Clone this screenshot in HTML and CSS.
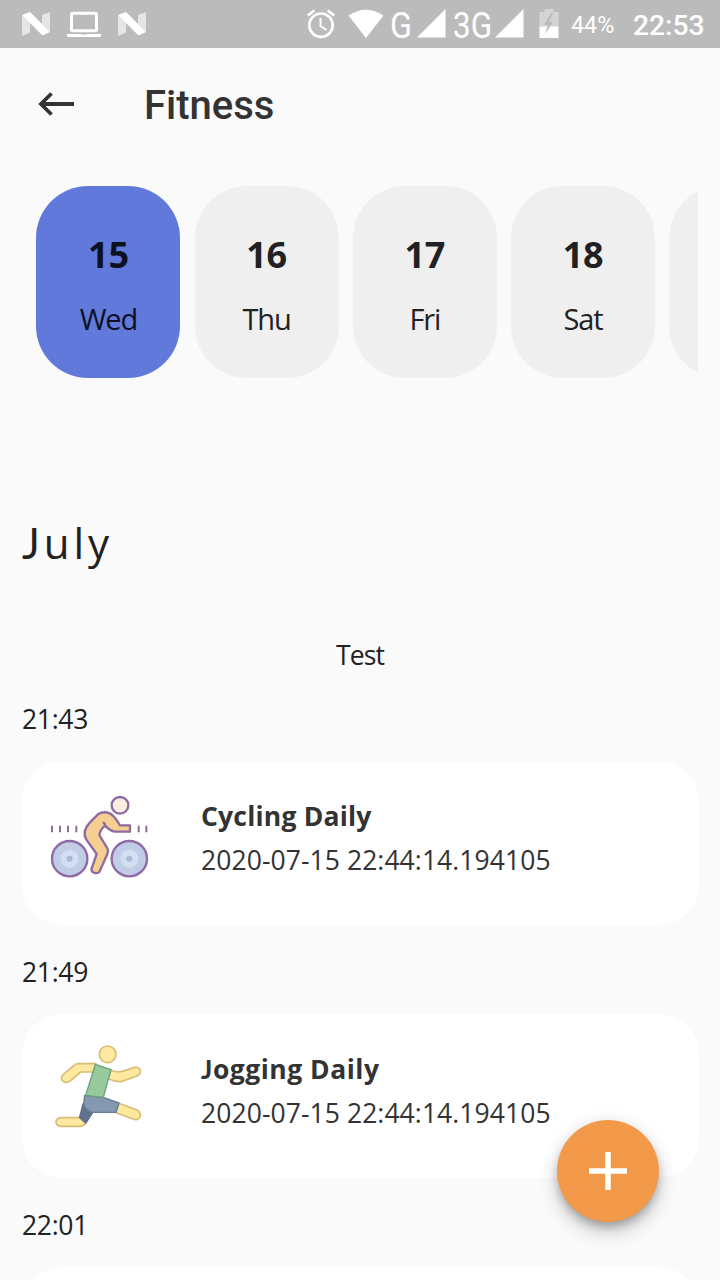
FILE: index.html
```html
<!DOCTYPE html>
<html lang="en">
<head>
<meta charset="utf-8">
<title>Fitness</title>
<link rel="stylesheet" href="styles.css">
</head>
<body>
<div class="screen">
  <header class="status">
    <svg class="notices" width="150" height="48" viewBox="0 0 150 48">
      <g id="nougat">
        <path fill="#e5e5e5" d="M22 15v21l8-3.500V20zM50 12v20l-8-8V15z"/>
        <path fill="#fff" d="M22 15l8-3 20 20-7.500 3.500z"/>
      </g>
      <rect x="71.500" y="13.200" width="25" height="17.500" rx="1.500" fill="none" stroke="#fff" stroke-width="3"/>
      <path fill="#fff" d="M67 34h34v1.500q0 1.500-1.500 1.500h-31q-1.500 0-1.500-1.500z"/>
      <path fill="#ddd" d="M81 34h6v1h-6z"/>
      <use href="#nougat" x="96"/>
    </svg>
    <div class="signals">
      <svg width="230" height="48" viewBox="300 0 230 48">
        <g fill="none" stroke="#fff">
          <circle cx="321" cy="25.200" r="11.700" stroke-width="2.600"/>
          <path d="M320.500 18v8l6 4" stroke-width="2"/>
          <path d="M307.800 15.500l6.500-5M327.700 10.500l6.500 5" stroke-width="2.800"/>
        </g>
        <path fill="#fff" d="M348.500 15.500Q366 4 383.500 15.500L366 38zM445.500 9v28.500H417zM523.500 9v28.500H495z"/>
        <g class="network" fill="#fff">
          <text x="390" y="37.500" textLength="22" lengthAdjust="spacingAndGlyphs">G</text>
          <text x="453" y="37.500" textLength="39" lengthAdjust="spacingAndGlyphs">3G</text>
        </g>
      </svg>
      <svg class="battery" width="20" height="48" viewBox="0 0 20 48">
        <path fill="#d4d4d4" d="M.5 12h5V9h9v3h5v15H.5z"/>
        <path fill="#fff" d="M.5 26.500h19V38H.5z"/>
        <path fill="#bbb" d="M12 13L5 25h4l-3 9 8-12h-4l4-9z"/>
      </svg>
      <span class="percent">44%</span>
      <span class="clock">22:53</span>
    </div>
  </header>

  <div class="appbar">
    <svg width="40" height="28" viewBox="0 0 40 28"><path d="M38 14H5M15.500 3.500L5 14l10.500 10.500" fill="none" stroke="#333" stroke-width="3.800"/></svg>
    <h1>Fitness</h1>
  </div>

  <div class="week">
    <div class="day active"><b>15</b><span>Wed</span></div>
    <div class="day"><b>16</b><span>Thu</span></div>
    <div class="day"><b>17</b><span>Fri</span></div>
    <div class="day"><b>18</b><span>Sat</span></div>
    <div class="day"></div>
  </div>

  <h2><span class="cap">J</span>uly</h2>
  <p class="label">Test</p>

  <div class="time">21:43</div>
  <article class="card">
    <svg class="sport" width="120" height="105" viewBox="0 0 360 315">
      <g stroke="#8e6ba5" stroke-width="7">
        <g fill="#c1cde7"><circle cx="89" cy="221" r="53"/><circle cx="268" cy="221" r="53"/></g>
        <path d="M36 122v20M60 122v20M84 122v20M109 122v20M296 122v20M319 122v20" stroke-width="6"/>
        <path fill="#f5cf90" stroke-linejoin="round" d="M150 112L174 88Q190 77 209 85Q219 89 233 110L240 121H270V140H224Q211 138 195 122Q180 135 178 150L202 190Q206 198 202 207L179 259Q174 267 161 263Q153 260 155 250L170 207L139 164Q124 139 150 112Z"/>
        <path fill="none" d="M189 112q8 5 7 15"/>
        <circle cx="240" cy="61" r="25" fill="#faeee0"/>
      </g>
      <g fill="#d4def2"><circle cx="89" cy="221" r="27"/><circle cx="268" cy="221" r="27"/></g>
      <g fill="#a9b9d6"><circle cx="89" cy="221" r="9"/><circle cx="268" cy="221" r="9"/></g>
    </svg>
    <div class="info"><h3>Cycling Daily</h3><p>2020-07-15 22:44:14.194105</p></div>
  </article>

  <div class="time">21:49</div>
  <article class="card jogging">
    <svg class="sport" width="120" height="105" viewBox="0 0 360 315">
      <g fill="#ffe8a0" stroke="#d9bd75" stroke-width="5" stroke-linejoin="round">
        <circle cx="203" cy="55" r="25"/>
        <path d="M168 83H115Q107 83 100 90L69 116Q60 127 69 136Q78 143 89 136L122 108H162Z"/>
        <path d="M212 102Q232 111 246 106L284 94Q298 92 301 103Q303 114 291 120L247 136Q229 139 204 128Z"/>
        <path d="M236 202L291 222Q304 230 300 243Q294 255 279 249L228 230Z"/>
        <path d="M119 245H61Q48 248 48 259Q50 270 62 271H124L137 263Z"/>
      </g>
      <path d="M129 202L118 245L138 262L158 231L160 204Z" fill="#5f7391" stroke="#596c89" stroke-width="3"/>
      <path d="M134 178L190 184L237 201L228 229H157Q138 223 131 204Z" fill="#8498b0" stroke="#667e9c" stroke-width="4"/>
      <path d="M166 85L213 101L190 184L137 178Z" fill="#97c99d" stroke="#68a179" stroke-width="4"/>
    </svg>
    <div class="info"><h3><span class="cap">J</span>ogging Daily</h3><p>2020-07-15 22:44:14.194105</p></div>
  </article>

  <div class="time">22:01</div>
  <article class="card"></article>

  <button class="fab" aria-label="Add">
    <svg width="40" height="40" viewBox="0 0 40 40"><path d="M20 1v38M1 20h38" stroke="#fff" stroke-width="5.500"/></svg>
  </button>
</div>
</body>
</html>
```

FILE: styles.css
```css
* { box-sizing: border-box; }
body, h1, h2, h3, p { margin: 0; }
body { background: #fafafa; }
.screen {
  position: relative;
  width: 720px;
  height: 1280px;
  overflow: hidden;
  color: #212121;
  font-family: "Open Sans", "Noto Sans", sans-serif;
  font-size: 26.5px;
}
svg { display: block; flex: none; }
.cap { font-family: Lato, sans-serif; line-height: 1; }
.status {
  display: flex;
  justify-content: space-between;
  height: 48px;
  background: #bbb;
  color: #fff;
  font-family: Roboto, sans-serif;
}
.signals { display: flex; align-items: center; width: 420px; }
.network { font: 37px Roboto, sans-serif; }
.battery { margin-left: 9px; }
.percent { margin-left: 12px; width: 62px; padding-top: 2px; font-size: 23.3px; line-height: 46px; }
.clock { padding-top: 3px; font-size: 28.2px; font-weight: 500; line-height: 45px; }
.appbar {
  display: flex;
  align-items: center;
  gap: 68px;
  height: 112px;
  padding-left: 36px;
}
.appbar h1 {
  padding-top: 4px;
  color: #333;
  font: 500 40px/48px Roboto, sans-serif;
}
.week {
  display: flex;
  gap: 14.2px;
  margin: 26px 22px 0;
  padding-left: 14.4px;
  overflow: hidden;
}
.day {
  display: flex;
  flex: none;
  flex-direction: column;
  align-items: center;
  gap: 16px;
  width: 144px;
  height: 192px;
  padding-top: 45px;
  border-radius: 52px;
  background: #efefef;
}
.day.active { background: #6079db; color: #0d111f; }
.day b { font-size: 36px; line-height: 48px; letter-spacing: -0.3px; }
.day span { font-size: 29px; line-height: 48px; letter-spacing: -1.2px; }
h2 {
  margin: 135px 0 0 22px;
  font-size: 42px;
  font-weight: 400;
  line-height: 60px;
  letter-spacing: 4px;
}
.label { margin-top: 62px; line-height: 40px; text-align: center; letter-spacing: -0.9px; }
.time { margin: 24px 0 0 22px; line-height: 40px; letter-spacing: -0.3px; }
.card {
  display: flex;
  width: 677px;
  height: 164px;
  margin: 22px 0 0 22px;
  padding: 24px 18px;
  border-radius: 40px;
  background: #fff;
  color: #333;
}
.card + .time { margin-top: 27px; }
.info { margin-left: 41px; padding-top: 9px; line-height: 44px; letter-spacing: 0.07px; }
.info h3 { font-size: 26.5px; font-weight: 700; letter-spacing: 0.2px; }
.jogging .sport { margin-top: -2px; }
.jogging h3 { letter-spacing: 0.5px; }
.fab {
  position: absolute;
  left: 557px;
  top: 1120px;
  display: grid;
  place-items: center;
  width: 102px;
  height: 102px;
  padding: 0;
  border: 0;
  border-radius: 50%;
  background: #f2994a;
  box-shadow: 0 6px 10px -2px rgba(0,0,0,.25), 0 12px 20px rgba(0,0,0,.14), 0 2px 18px rgba(0,0,0,.1);
}
```
